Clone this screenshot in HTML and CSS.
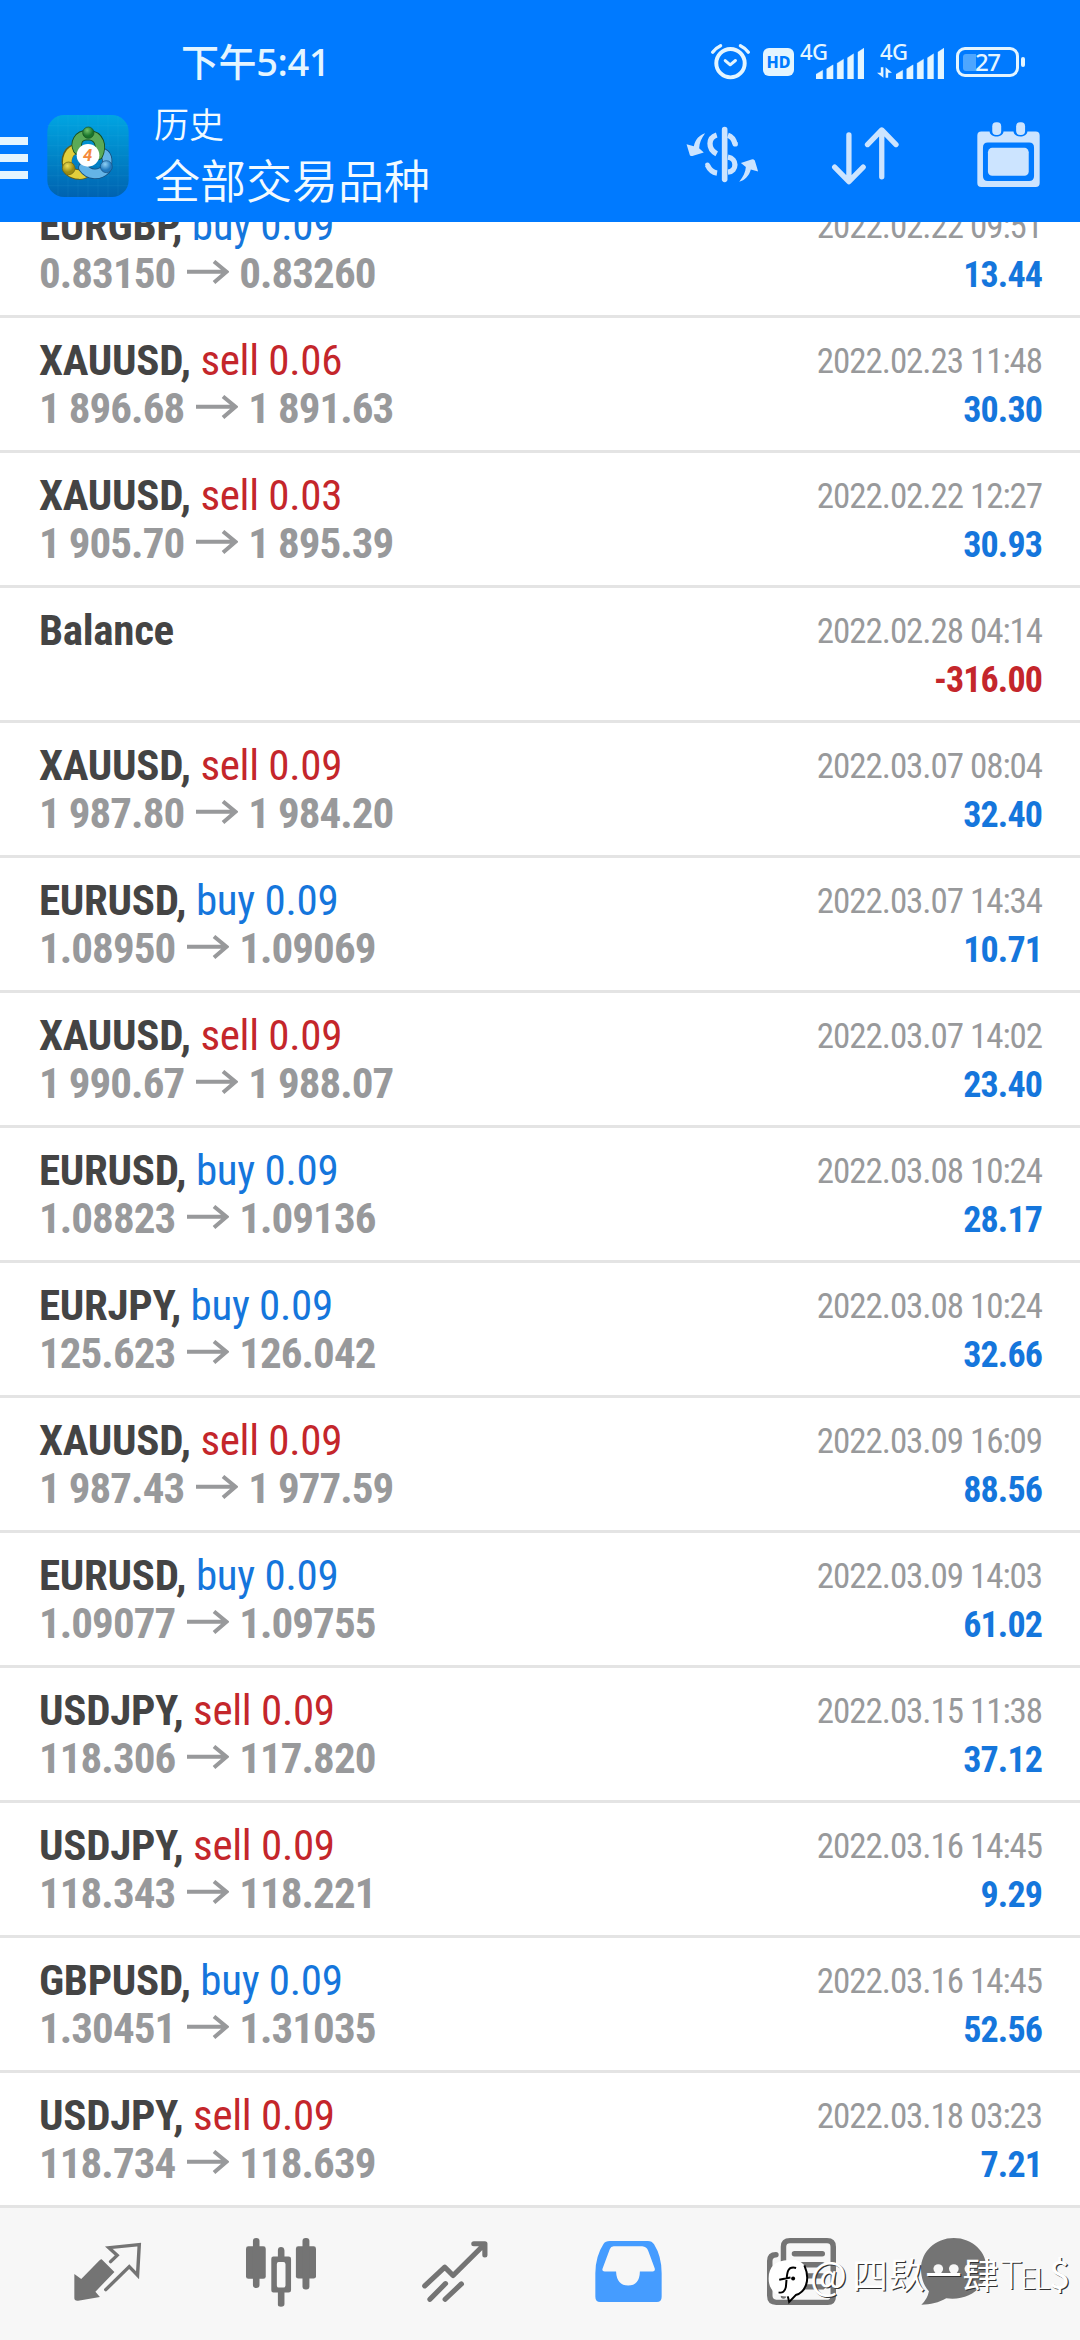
FILE: index.html
```html
<!DOCTYPE html>
<html lang="zh-CN">
<head>
<meta charset="utf-8">
<title>历史</title>
<link rel="stylesheet" href="styles.css">
</head>
<body>
<svg class="defs" width="0" height="0">
  <symbol id="arrow" viewBox="0 0 42 24"><path d="M0 11.8H38M27 1.5L39.5 11.8L27 22.5" fill="none" stroke="currentColor" stroke-width="4"/></symbol>
  <symbol id="bars" viewBox="0 0 143 92"><path d="M0 92V78L20 66V92ZM32 92V62L51 50V92ZM63 92V45L82 33V92ZM94 92V29L112 17V92ZM125 92V12L143 0V92Z" fill="currentColor" stroke="currentColor" stroke-width="1" stroke-linejoin="round"/></symbol>
</svg>
<header class="header">
  <div class="status">
    <div class="time">下午<span>5:41</span></div>
    <div class="status-icons">
      <svg class="alarm" viewBox="0 0 118 110"><g fill="none" stroke="currentColor"><circle cx="59" cy="60" r="43" stroke-width="12"/><path d="M43 52L58 65L74 52" stroke-width="9" stroke-linecap="round" stroke-linejoin="round"/><path d="M5 27Q14 14 29 7M113 27Q104 14 89 7" stroke-width="10" stroke-linecap="round"/></g></svg>
      <div class="hd">HD</div>
      <div class="signal"><span>4G</span><svg class="bars"><use href="#bars"/></svg></div>
      <div class="signal second"><span>4G</span><svg class="data" viewBox="0 0 47 33"><path d="M12 0H20V33L0 17H12ZM27 33H35V17H47L27 0Z" fill="currentColor"/></svg><svg class="bars"><use href="#bars"/></svg></div>
      <div class="battery"><i></i><b>27</b></div><div class="nub"></div>
    </div>
  </div>
  <div class="toolbar">
    <div class="menu"><i></i><i></i><i></i></div>
    <svg class="logo" viewBox="22 22 244 246">
      <defs>
        <linearGradient id="bg" x1="0" y1="0" x2="0" y2="1"><stop offset="0" stop-color="#00a5e2"/><stop offset=".5" stop-color="#0085c8"/><stop offset="1" stop-color="#0062b0"/></linearGradient>
        <radialGradient id="gr" cx=".4" cy=".3"><stop offset="0" stop-color="#74c46b"/><stop offset="1" stop-color="#19742b"/></radialGradient>
        <radialGradient id="ye" cx=".4" cy=".3"><stop offset="0" stop-color="#efe05a"/><stop offset="1" stop-color="#9b8c12"/></radialGradient>
        <radialGradient id="bl" cx=".4" cy=".3"><stop offset="0" stop-color="#8fd0f5"/><stop offset="1" stop-color="#1f78bd"/></radialGradient>
      </defs>
      <rect x="22" y="22" width="244" height="246" rx="50" fill="url(#bg)"/>
      <path d="M54 24V266M84 22V268M114 22V268M144 22V268M174 22V268M204 22V268M234 24V266M22 54H266M22 84H266M22 114H266M22 144H266M22 174H266M22 204H266M24 234H264" stroke="#5cc8ee" stroke-width="1" opacity=".25"/>
      <g fill="none" stroke-linecap="round">
        <path d="M88 190C68 150 90 124 112 124M88 190C106 205 130 202 138 194" stroke="#665f13" stroke-width="31"/>
        <path d="M88 190C72 152 90 126 112 124M88 190C106 205 130 202 138 194" stroke="#e2cf3c" stroke-width="26"/>
        <path d="M198 184C206 152 200 138 184 136M198 184C180 204 146 204 130 180" stroke="#174f7e" stroke-width="31"/>
        <path d="M198 184C206 152 200 138 184 136M198 184C180 204 146 204 130 180" stroke="#64b4e7" stroke-width="26"/>
        <path d="M144 82C114 82 104 106 114 126M144 82C180 84 186 116 174 142" stroke="#164e20" stroke-width="31"/>
        <path d="M144 82C114 82 104 106 114 126M144 82C180 84 186 116 174 142" stroke="#5baa57" stroke-width="26"/>
      </g>
      <g stroke-width="2"><circle cx="145" cy="75" r="17" fill="url(#gr)" stroke="#164e20"/><circle cx="86" cy="182" r="19" fill="url(#ye)" stroke="#665f13"/><circle cx="199" cy="177" r="18" fill="url(#bl)" stroke="#174f7e"/></g>
      <circle cx="144" cy="143" r="34" fill="#fff"/>
      <text x="143" y="161" text-anchor="middle" class="logo-digit">4</text>
    </svg>
    <div class="titles"><h1>历史</h1><h2>全部交易品种</h2></div>
    <svg class="tool dollar" viewBox="78 380 219 166"><g fill="none" stroke="currentColor"><path d="M194 388V538" stroke-width="17" stroke-linecap="round"/><path d="M170 404C144 412 142 446 170 461M204 405C216 409 222 418 225 431M204 471C232 475 232 514 204 516M142 495C149 510 158 517 171 519" stroke-width="16"/><circle cx="226" cy="431" r="8" fill="currentColor" stroke="none"/><circle cx="142" cy="494" r="7" fill="currentColor" stroke="none"/></g><path d="M135 399C119 404 106 416 101 438L79 432L89 465Q93 469 99 467L131 457L117 444C118 428 124 414 135 399ZM238 545C254 541 268 527 273 508L295 514L285 481Q281 476 275 478L243 489L258 501C257 517 250 531 238 545Z" fill="currentColor"/></svg>
    <svg class="tool sort" viewBox="515 380 202 173"><path d="M566 403V542M523 500L566 544L609 500M665 529V390M622 432L665 388L708 432" fill="none" stroke="currentColor" stroke-width="16" stroke-linecap="round" stroke-linejoin="round"/></svg>
    <svg class="tool calendar" viewBox="950 367 188 196"><path fill-rule="evenodd" fill="currentColor" d="M962 396H987C989 416 1027 416 1029 396H1059C1061 416 1099 416 1101 396H1126Q1138 396 1138 408V551Q1138 563 1126 563H962Q950 563 950 551V408Q950 396 962 396ZM982 429Q967 429 967 444V530Q967 545 982 545H1106Q1121 545 1121 530V444Q1121 429 1106 429Z"/><rect x="982" y="445" width="123" height="84" rx="13" fill="currentColor"/><rect x="995" y="368" width="27" height="38" rx="12" fill="currentColor"/><rect x="1067" y="368" width="27" height="38" rx="12" fill="currentColor"/></svg>
  </div>
</header>
<main class="list">
  <div class="row"><div class="deal"><p>EURGBP, <span class="buy">buy 0.09</span></p><p class="price">0.83150<svg><use href="#arrow"/></svg>0.83260</p></div><div class="result"><time>2022.02.22 09:51</time><b>13.44</b></div></div>
  <div class="row"><div class="deal"><p>XAUUSD, <span class="sell">sell 0.06</span></p><p class="price">1 896.68<svg><use href="#arrow"/></svg>1 891.63</p></div><div class="result"><time>2022.02.23 11:48</time><b>30.30</b></div></div>
  <div class="row"><div class="deal"><p>XAUUSD, <span class="sell">sell 0.03</span></p><p class="price">1 905.70<svg><use href="#arrow"/></svg>1 895.39</p></div><div class="result"><time>2022.02.22 12:27</time><b>30.93</b></div></div>
  <div class="row"><div class="deal"><p>Balance</p></div><div class="result"><time>2022.02.28 04:14</time><b class="loss">-316.00</b></div></div>
  <div class="row"><div class="deal"><p>XAUUSD, <span class="sell">sell 0.09</span></p><p class="price">1 987.80<svg><use href="#arrow"/></svg>1 984.20</p></div><div class="result"><time>2022.03.07 08:04</time><b>32.40</b></div></div>
  <div class="row"><div class="deal"><p>EURUSD, <span class="buy">buy 0.09</span></p><p class="price">1.08950<svg><use href="#arrow"/></svg>1.09069</p></div><div class="result"><time>2022.03.07 14:34</time><b>10.71</b></div></div>
  <div class="row"><div class="deal"><p>XAUUSD, <span class="sell">sell 0.09</span></p><p class="price">1 990.67<svg><use href="#arrow"/></svg>1 988.07</p></div><div class="result"><time>2022.03.07 14:02</time><b>23.40</b></div></div>
  <div class="row"><div class="deal"><p>EURUSD, <span class="buy">buy 0.09</span></p><p class="price">1.08823<svg><use href="#arrow"/></svg>1.09136</p></div><div class="result"><time>2022.03.08 10:24</time><b>28.17</b></div></div>
  <div class="row"><div class="deal"><p>EURJPY, <span class="buy">buy 0.09</span></p><p class="price">125.623<svg><use href="#arrow"/></svg>126.042</p></div><div class="result"><time>2022.03.08 10:24</time><b>32.66</b></div></div>
  <div class="row"><div class="deal"><p>XAUUSD, <span class="sell">sell 0.09</span></p><p class="price">1 987.43<svg><use href="#arrow"/></svg>1 977.59</p></div><div class="result"><time>2022.03.09 16:09</time><b>88.56</b></div></div>
  <div class="row"><div class="deal"><p>EURUSD, <span class="buy">buy 0.09</span></p><p class="price">1.09077<svg><use href="#arrow"/></svg>1.09755</p></div><div class="result"><time>2022.03.09 14:03</time><b>61.02</b></div></div>
  <div class="row"><div class="deal"><p>USDJPY, <span class="sell">sell 0.09</span></p><p class="price">118.306<svg><use href="#arrow"/></svg>117.820</p></div><div class="result"><time>2022.03.15 11:38</time><b>37.12</b></div></div>
  <div class="row"><div class="deal"><p>USDJPY, <span class="sell">sell 0.09</span></p><p class="price">118.343<svg><use href="#arrow"/></svg>118.221</p></div><div class="result"><time>2022.03.16 14:45</time><b>9.29</b></div></div>
  <div class="row"><div class="deal"><p>GBPUSD, <span class="buy">buy 0.09</span></p><p class="price">1.30451<svg><use href="#arrow"/></svg>1.31035</p></div><div class="result"><time>2022.03.16 14:45</time><b>52.56</b></div></div>
  <div class="row"><div class="deal"><p>USDJPY, <span class="sell">sell 0.09</span></p><p class="price">118.734<svg><use href="#arrow"/></svg>118.639</p></div><div class="result"><time>2022.03.18 03:23</time><b>7.21</b></div></div>
</main>
<nav class="nav">
  <svg class="n1" preserveAspectRatio="none" viewBox="218 160 194 174"><path d="M298 209L335 247L280 306L293 322L230 333Q219 334 219 326V253L239 268L290 214Q295 208 298 209Z" fill="currentColor"/><path d="M310 300L378 231L402 257L407 165L319 174L343 197L324 216" fill="none" stroke="currentColor" stroke-width="10" stroke-linecap="round"/></svg>
  <svg class="n2" preserveAspectRatio="none" viewBox="715 143 202 206"><g fill="currentColor"><rect x="715" y="168" width="57" height="97" rx="7"/><rect x="735" y="143" width="19" height="149" rx="9"/><rect x="859" y="168" width="58" height="96" rx="7"/><rect x="878" y="143" width="20" height="154" rx="9"/><path fill-rule="evenodd" d="M807 198V180Q807 170 816 170T826 180V198H838Q845 198 845 205V299Q845 306 838 306H826V340Q826 348 816 348T807 340V306H794Q788 306 788 299V205Q788 198 794 198ZM809 215Q804 215 804 221V285Q804 291 809 291H823Q829 291 829 285V221Q829 215 823 215Z"/></g></svg>
  <svg class="n3" preserveAspectRatio="none" viewBox="1223 152 191 182"><path d="M1231 286L1289 230L1313 255L1404 162M1373 160H1405V194M1246 326L1291 279M1290 326L1337 280" fill="none" stroke="currentColor" stroke-width="15" stroke-linecap="round" stroke-linejoin="round"/></svg>
  <svg class="n4" preserveAspectRatio="none" viewBox="157 152 194 182"><path fill-rule="evenodd" fill="currentColor" d="M200 152H310Q322 152 328 162Q350 198 350 248V318Q350 334 336 334H172Q158 334 158 318V248Q158 198 182 160Q187 152 200 152ZM211 168Q203 168 200 176L179 234Q176 243 185 243H218Q220 285 253 285Q286 285 287 243H324Q332 243 330 234L311 181Q306 169 294 168Z"/></svg>
  <svg class="n5" preserveAspectRatio="none" viewBox="658 143 201 200"><path d="M684 193Q666 193 666 212V315Q666 335 685 335H835Q851 335 851 317V169Q851 151 833 151H725Q706 151 706 169V316" fill="none" stroke="currentColor" stroke-width="16" stroke-linecap="round"/><path d="M738 190H819M738 223H819M738 256H819M738 289H819" stroke="currentColor" stroke-width="16" stroke-linecap="round"/></svg>
  <svg class="n6" preserveAspectRatio="none" viewBox="1103 143 191 200"><path d="M1198 143C1252 143 1293 184 1293 235C1293 291 1240 332 1176 323C1155 336 1130 342 1104 342Q1122 325 1126 302C1109 283 1103 258 1103 235C1103 184 1145 143 1198 143Z" fill="currentColor"/><g fill="#f7f7f7"><circle cx="1153" cy="235" r="14"/><circle cx="1198" cy="235" r="14"/><circle cx="1243" cy="235" r="14"/></g></svg>
</nav>
<div class="watermark">
  <svg viewBox="38 98 124 136"><path d="M100 104C140 100 159 122 158 158C157 188 142 205 124 212L102 233L98 214C62 216 40 194 40 160C40 124 60 106 100 104Z" fill="#fff"/><path d="M148 120C168 166 150 202 122 210L102 231L98 214M123 128C92 120 96 150 92 186Q88 206 70 202M72 164L106 157" fill="none" stroke="#000" stroke-width="6"/><circle cx="114" cy="160" r="6"/></svg>
  <span class="at">@</span><span class="cjk">四镹一肆</span><span class="tel">T<small>EL</small></span><span class="cash">$</span>
</div>
</body>
</html>
```
FILE: styles.css
```css
* { box-sizing: border-box; margin: 0; padding: 0; }
body { width: 1080px; height: 2340px; overflow: hidden; position: relative; background: #fff; font-family: "Roboto Condensed", Roboto, sans-serif; font-stretch: 75%; }
svg { display: block; flex: none; overflow: visible; }
.defs { position: absolute; }

.header { height: 222px; background: #007aff; color: #e4f5ff; }
.status { height: 104px; display: flex; justify-content: space-between; padding: 0 55px 0 181px; }
.time { font: 500 38px/54px "Noto Sans CJK SC", sans-serif; padding-top: 33px; white-space: nowrap; letter-spacing: -.4px; }
.time span { font-family: "Noto Sans", sans-serif; }
.status-icons { display: flex; align-items: flex-start; padding-top: 43px; }
.alarm { width: 39px; height: 37px; }
.hd { width: 31px; height: 28px; margin: 5px 0 0 13px; border-radius: 6px; background: #e4f5ff; color: #007aff; font: 800 16px/29px "Noto Sans", sans-serif; text-align: center; }
.signal { display: flex; width: 64px; height: 37px; margin-left: 6px; font: 500 22px/22px "Noto Sans", sans-serif; }
.signal span { width: 16px; white-space: nowrap; margin-top: -3px; letter-spacing: -.5px; }
.bars { width: 48px; height: 31px; margin-top: 5px; }
.second { margin-left: 13px; width: 67px; }
.second span { margin-left: 3px; width: 0; }
.data { width: 15px; height: 11px; margin: 24px 4px 0 -3px; }
.battery { width: 63px; height: 30px; margin: 4px 0 0 12px; border: 3px solid #e4f5ff; border-radius: 9px; display: flex; align-items: center; padding-left: 4px; }
.battery i { width: 13px; height: 17px; background: #4da6ff; border-radius: 3px 0 0 3px; }
.battery b { font: 500 24px/24px "Noto Sans", sans-serif; letter-spacing: -1.5px; margin-left: -1px; }
.nub { width: 4px; height: 10px; margin: 14px 0 0 2px; border-radius: 2px; background: #e4f5ff; }

.toolbar { display: flex; height: 118px; align-items: flex-start; }
.menu { width: 28px; padding-top: 33px; display: flex; flex-direction: column; gap: 9px; }
.menu i { height: 8px; background: #e4f5ff; }
.logo { width: 82px; height: 82px; margin: 11px 0 0 19px; }
.logo-digit { font: italic 700 50px Roboto, sans-serif; fill: #f58a3c; }
.titles { width: 532px; margin-left: 25px; color: #f2faff; font-family: "Noto Sans CJK SC", sans-serif; }
.titles h1 { font-size: 35px; line-height: 40px; font-weight: 350; margin-top: -1px; }
.titles h2 { font-size: 46px; line-height: 60px; font-weight: 350; margin-top: 5px; }
.tool { color: #cce4ff; margin-top: 23px; }
.dollar { width: 73px; height: 55px; }
.sort { width: 67px; height: 58px; margin-left: 73px; }
.calendar { width: 63px; height: 65px; margin: 18px 0 0 78px; }

.list { height: 1986px; overflow: hidden; }
.row { height: 135px; border-bottom: 3px solid #e4e4e4; display: flex; justify-content: space-between; padding: 0 38px 0 39px; }
.row:first-child { margin-top: -39px; }
.deal { padding-top: 18px; font-size: 43px; line-height: 48px; font-weight: 700; letter-spacing: -.3px; color: #444; white-space: nowrap; }
.deal span { font-weight: 400; }
.buy { color: #1576dc; }
.sell { color: #c4262b; }
.price { display: flex; color: #98999b; letter-spacing: -.95px; }
.price svg { width: 42px; height: 24px; margin: 11px 10px 0 12px; }
.result { padding-top: 20px; font-size: 35px; line-height: 48px; text-align: right; display: flex; flex-direction: column; }
.result time { color: #98999b; letter-spacing: -1.05px; }
.result b { color: #1576dc; font-size: 36px; letter-spacing: -.9px; }
.result .loss { color: #c4262b; }

.nav { height: 132px; background: #f7f7f7; color: #747474; display: grid; grid-template-columns: repeat(5, 173.5px) 130px; justify-items: center; padding-left: 21px; }
.n1 { width: 67px; height: 58px; margin-top: 35px; }
.n2 { width: 70px; height: 69px; margin-top: 30px; }
.n3 { width: 66px; height: 61px; margin-top: 33px; }
.n4 { width: 67px; height: 61px; margin-top: 33px; color: #459cff; }
.n5 { width: 69px; height: 67px; margin-top: 30px; }
.n6 { width: 66px; height: 67px; margin-top: 30px; }

.watermark { position: absolute; left: 768px; top: 2248px; display: flex; height: 54px; color: #fff; text-shadow: 1.2px 1.2px 0 #333; font: 400 36px/50px "Noto Sans CJK SC", sans-serif; white-space: nowrap; }
.watermark svg { width: 41px; height: 45px; margin-top: 10px; }
.at { width: 42px; margin-left: 1px; font-size: 39px; }
.cjk { width: 149px; letter-spacing: .8px; }
.tel { width: 48px; font: 300 39px/51px "Open Sans", sans-serif; letter-spacing: -1px; }
.tel small { font-size: 29px; }
.cash { font-size: 38px; }
```
